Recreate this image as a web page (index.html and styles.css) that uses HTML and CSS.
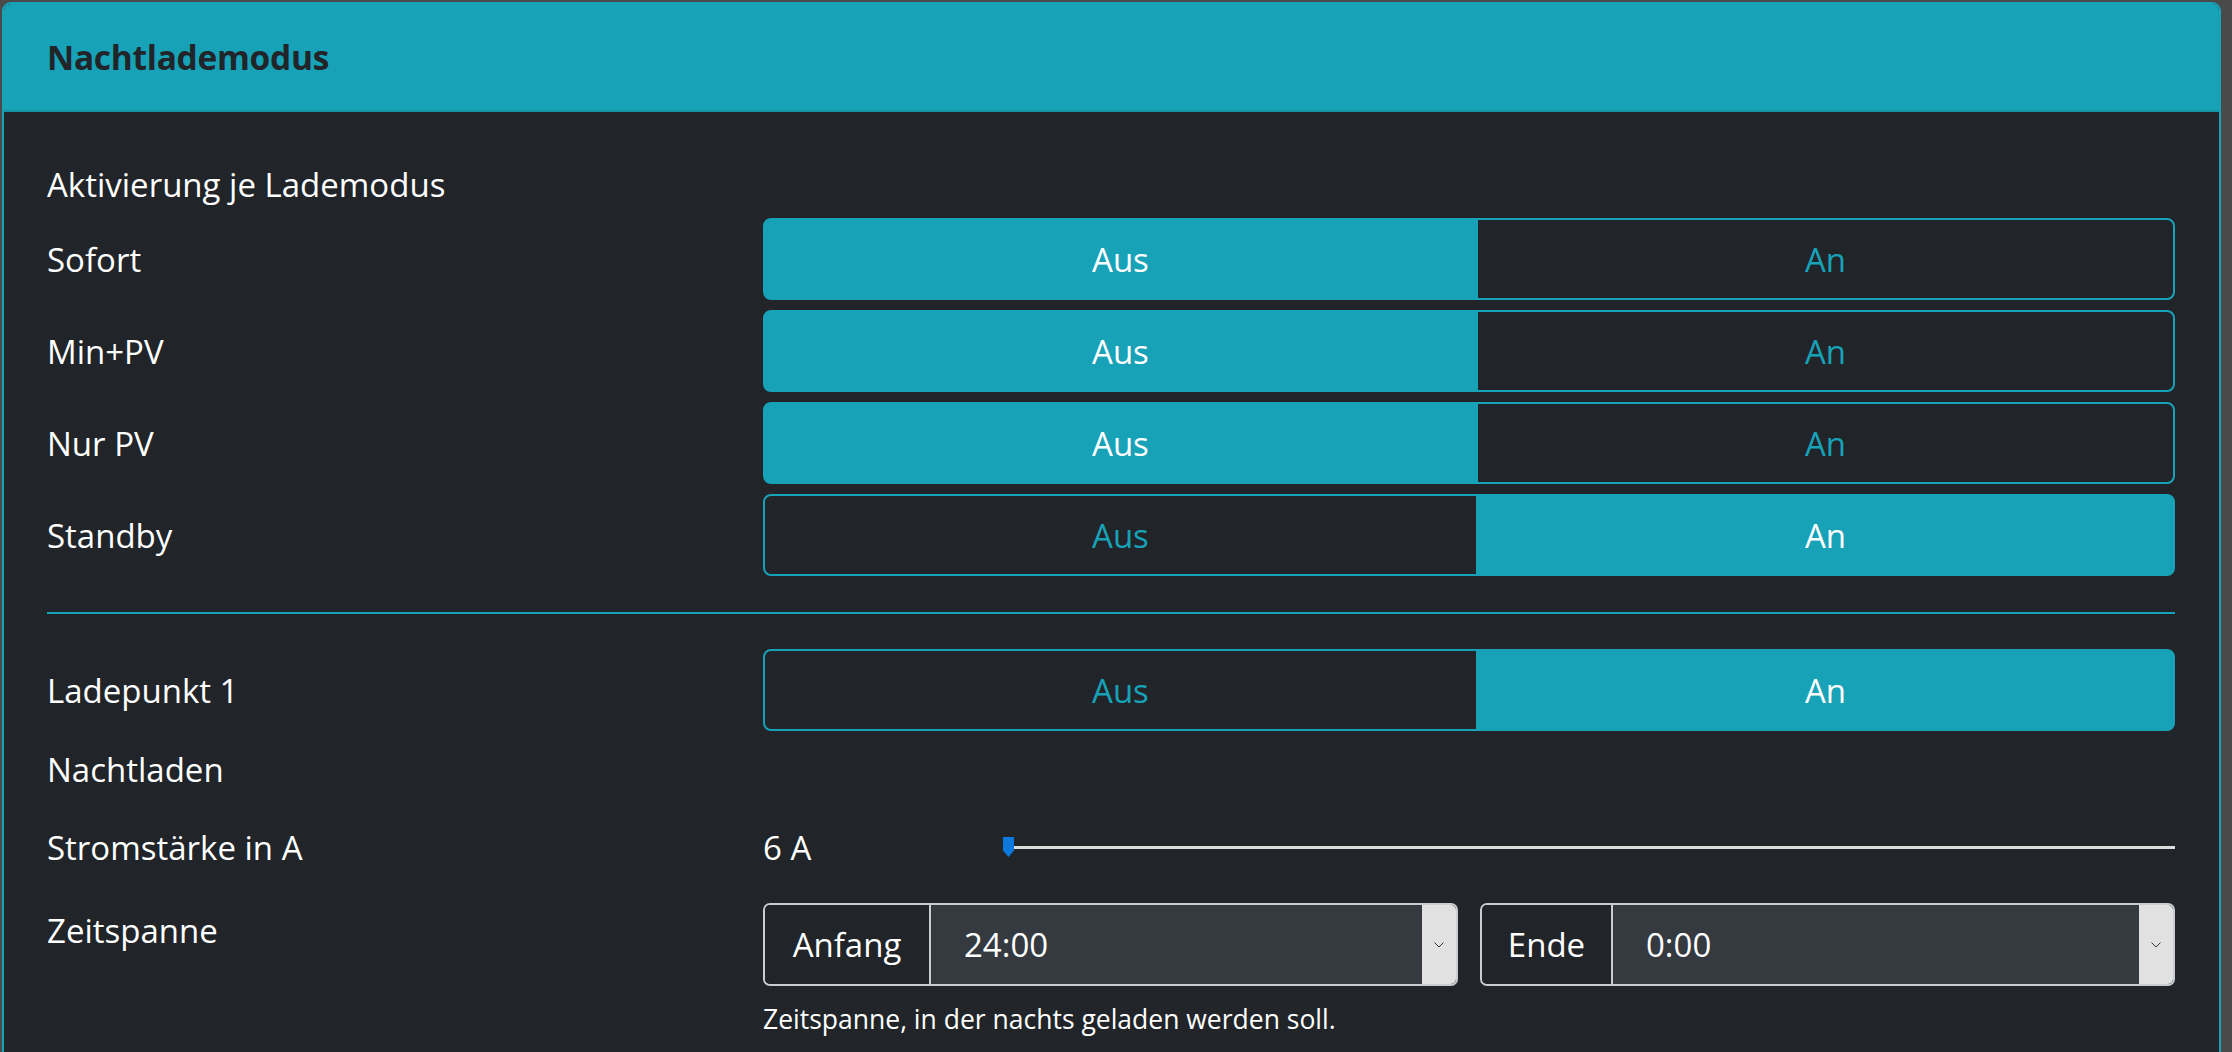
FILE: index.html
```html
<!DOCTYPE html>
<html lang="de">
<head>
<meta charset="utf-8">
<title>Nachtlademodus</title>
<link rel="stylesheet" href="styles.css">
</head>
<body>
<div class="card">
  <div class="card-header"><h3 class="card-title">Nachtlademodus</h3></div>
  <div class="card-body">
    <div class="section-title">Aktivierung je Lademodus</div>

    <div class="form-row">
      <div class="label">Sofort</div>
      <div class="btn-group"><button class="btn active">Aus</button><button class="btn">An</button></div>
    </div>
    <div class="form-row">
      <div class="label">Min+PV</div>
      <div class="btn-group"><button class="btn active">Aus</button><button class="btn">An</button></div>
    </div>
    <div class="form-row">
      <div class="label">Nur PV</div>
      <div class="btn-group"><button class="btn active">Aus</button><button class="btn">An</button></div>
    </div>
    <div class="form-row last">
      <div class="label">Standby</div>
      <div class="btn-group"><button class="btn">Aus</button><button class="btn active">An</button></div>
    </div>

    <hr class="divider">

    <div class="form-row lp">
      <div class="label">Ladepunkt 1</div>
      <div class="btn-group"><button class="btn">Aus</button><button class="btn active">An</button></div>
    </div>

    <div class="sub-title">Nachtladen</div>

    <div class="form-row range-row">
      <div class="label">Stromstärke in A</div>
      <div class="range-control">
        <div class="range-value">6 A</div>
        <div class="slider">
          <div class="track"></div>
          <svg class="thumb" width="11" height="20" viewBox="0 0 11 20"><path d="M0 0H11V13.5L5.5 20L0 13.5Z" fill="#0a78dc"/></svg>
        </div>
      </div>
    </div>

    <div class="form-row time-row">
      <div class="label">Zeitspanne</div>
      <div class="time-control">
        <div class="groups">
          <div class="input-group">
            <div class="prepend anfang">Anfang</div>
            <div class="select"><span class="value">24:00</span><span class="arrow"><svg width="10" height="6" viewBox="0 0 10 6"><path d="M0.5 0.5L5 5L9.5 0.5" fill="none" stroke="#3a3a3a" stroke-width="1"/></svg></span></div>
          </div>
          <div class="input-group">
            <div class="prepend ende">Ende</div>
            <div class="select"><span class="value">0:00</span><span class="arrow"><svg width="10" height="6" viewBox="0 0 10 6"><path d="M0.5 0.5L5 5L9.5 0.5" fill="none" stroke="#3a3a3a" stroke-width="1"/></svg></span></div>
          </div>
        </div>
        <div class="help">Zeitspanne, in der nachts geladen werden soll.</div>
      </div>
    </div>
  </div>
</div>
</body>
</html>
```

FILE: styles.css
```css
html, body {
  margin: 0;
  padding: 0;
  overflow: hidden;
  height: 100%;
}
body {
  background: #4a4a4a;
  font-family: "Open Sans", "Noto Sans", sans-serif;
  color: #ffffff;
  font-size: 33px;
}
.card {
  margin: 2px 11px 0 2px;
  border: 2px solid #17a2b8;
  border-bottom: none;
  border-radius: 9px 9px 0 0;
  background: #212529;
  height: 1100px;
  overflow: hidden;
}
.card-header {
  background: #17a2b8;
  height: 106px;
  border-bottom: 2px solid #1592a6;
  display: flex;
  align-items: center;
  padding: 0 43px;
}
.card-title {
  margin: 0;
  font-size: 33.5px;
  font-weight: 700;
  color: #212529;
  letter-spacing: -0.3px;
}
.card-body {
  padding: 47px 44px 0 43px;
}
.section-title {
  line-height: 51px;
  height: 51px;
  margin-bottom: 8px;
}
.form-row {
  display: grid;
  grid-template-columns: 716px 1fr;
  align-items: center;
  margin-bottom: 10px;
}
.form-row.last { margin-bottom: 0; }
.label {
  line-height: 51px;
}
.btn-group {
  display: flex;
  height: 82px;
}
.btn {
  flex: 1 1 auto;
  font-family: inherit;
  font-size: 33px;
  background: transparent;
  color: #17a2b8;
  border: 2px solid #17a2b8;
  padding: 0 26px;
  margin: 0;
}
.btn:first-child {
  border-radius: 8px 0 0 8px;
}
.btn:last-child {
  border-radius: 0 8px 8px 0;
  margin-left: -2px;
}
.btn.active {
  background: #17a2b8;
  color: #ffffff;
}
.divider {
  border: 0;
  border-top: 2px solid #17a2b8;
  margin: 36px 0 35px 0;
  height: 0;
}
.form-row.lp { margin-bottom: 13px; }
.sub-title {
  line-height: 51px;
  height: 51px;
  margin-bottom: 27px;
}
.form-row.range-row { margin-bottom: 30px; }
.range-control {
  display: grid;
  grid-template-columns: 241px 1fr;
  align-items: center;
  height: 51px;
}
.range-value { line-height: 51px; }
.slider {
  position: relative;
  height: 20px;
}
.track {
  position: absolute;
  left: 0;
  right: 0;
  top: 8px;
  height: 3px;
  background: #dcdcdc;
}
.thumb {
  position: absolute;
  left: -1px;
  top: -1px;
}
.form-row.time-row {
  align-items: start;
}
.time-row .label {
  margin-top: 2px;
}
.groups {
  display: grid;
  grid-template-columns: 1fr 1fr;
  column-gap: 22px;
}
.input-group {
  display: flex;
  height: 83px;
  box-sizing: border-box;
  border: 2px solid #c9ccd0;
  border-radius: 7px;
  overflow: hidden;
}
.prepend {
  display: flex;
  align-items: center;
  justify-content: center;
  background: #212529;
  border-right: 2px solid #c9ccd0;
  box-sizing: border-box;
}
.prepend.anfang { width: 166px; }
.prepend.ende { width: 131px; }
.select {
  flex: 1;
  display: flex;
  background: #353a41;
}
.select .value {
  flex: 1;
  display: flex;
  align-items: center;
  padding-left: 33px;
}
.select .arrow {
  width: 34px;
  background: #e1e1e1;
  display: flex;
  align-items: center;
  justify-content: center;
}
.help {
  font-size: 26.5px;
  line-height: 40px;
  margin-top: 13px;
}
```
